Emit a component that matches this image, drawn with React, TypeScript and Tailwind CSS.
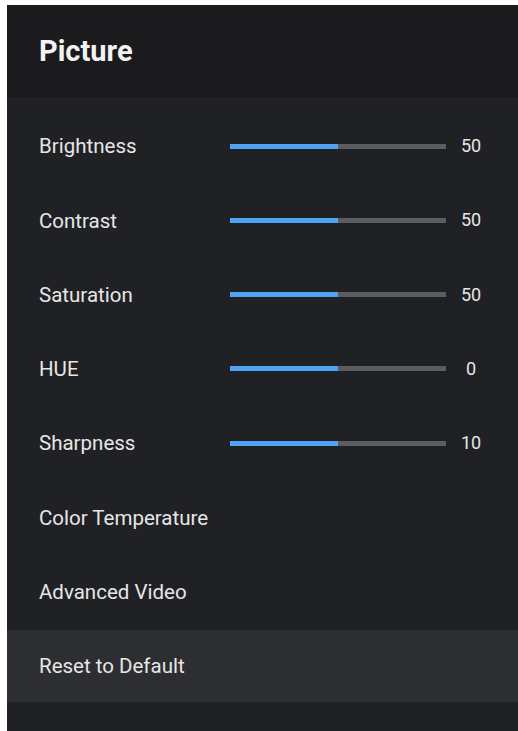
type Row = {
  label: string;
  value?: number;
  fill?: number;
  active?: boolean;
};

const ROWS: Row[] = [
  { label: "Brightness", value: 50, fill: 50 },
  { label: "Contrast", value: 50, fill: 50 },
  { label: "Saturation", value: 50, fill: 50 },
  { label: "HUE", value: 0, fill: 50 },
  { label: "Sharpness", value: 10, fill: 50 },
  { label: "Color Temperature" },
  { label: "Advanced Video" },
  { label: "Reset to Default", active: true },
];

export default function App() {
  return (
    <div
      className="min-h-screen bg-white pl-[7px] pt-[5px] flex flex-col"
      style={{ fontFamily: "Roboto, 'Noto Sans', Arial, sans-serif" }}
    >
      <div className="flex-1 bg-[#202125] flex flex-col">
        <header className="h-[92px] bg-[#1b1b1d] flex items-center pl-[32px]">
          <h1 className="text-[29px] font-bold text-[#f2f2f2] leading-none">Picture</h1>
        </header>

        <ul className="flex flex-col gap-[2.3px] pt-[13px]">
          {ROWS.map((row) => (
            <li
              key={row.label}
              className={`h-[72px] flex items-center pl-[32px] ${row.active ? "bg-[#2d2e32]" : ""}`}
            >
              <span className="w-[191px] shrink-0 text-[20.5px] text-[#e6e6e6] leading-none pt-[1px]">
                {row.label}
              </span>
              {row.value !== undefined && (
                <>
                  <div className="w-[216px] h-[5px] bg-[#5c5d60] flex">
                    <div className="h-full bg-[#4fa3f7]" style={{ width: `${row.fill}%` }} />
                  </div>
                  <span className="ml-[14px] w-[22px] text-center text-[18px] text-[#e6e6e6] leading-none">
                    {row.value}
                  </span>
                </>
              )}
            </li>
          ))}
        </ul>
      </div>
    </div>
  );
}
